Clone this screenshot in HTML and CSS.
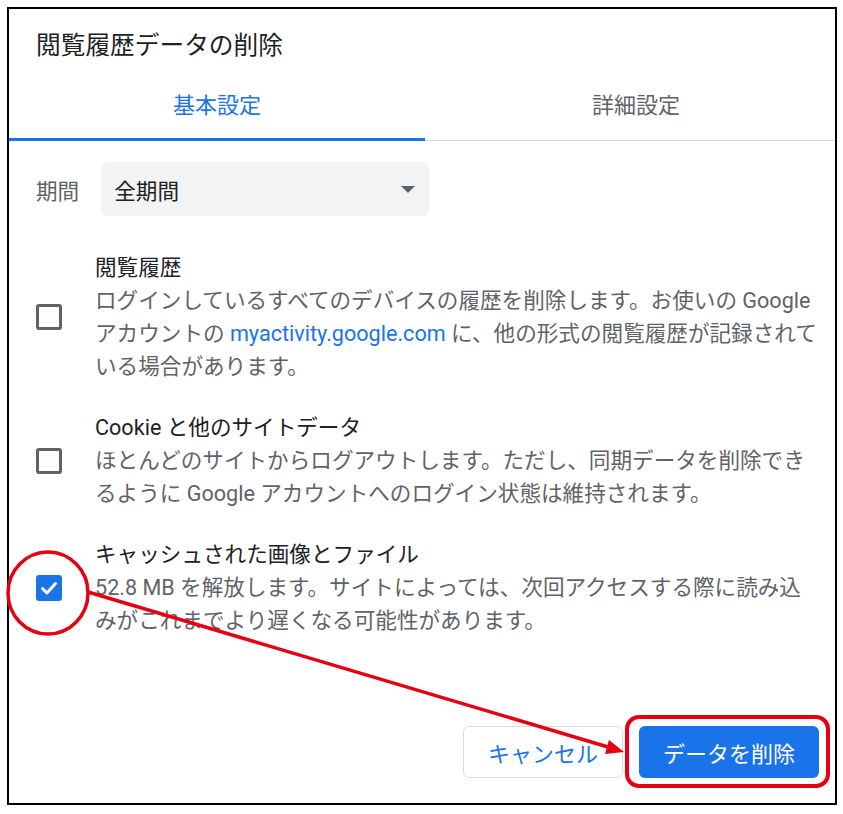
FILE: index.html
```html
<!DOCTYPE html>
<html lang="ja">

<head>
    <meta charset="UTF-8">
    <meta name="viewport" content="width=device-width, initial-scale=1.0">
    <title>閲覧履歴データの削除</title>
    <link rel="stylesheet" href="styles.css">
</head>

<body>
    <div class="dialog">
        <h1 class="dialog-title">閲覧履歴データの削除</h1>

        <div class="tabs">
            <div class="tab active">基本設定</div>
            <div class="tab">詳細設定</div>
        </div>

        <div class="period-row">
            <span class="period-label">期間</span>
            <div class="select">
                <span>全期間</span>
                <span class="select-arrow"></span>
            </div>
        </div>

        <!-- Checkbox items -->
        <div class="items">
            <div class="item">
                <span class="checkbox"></span>
                <div class="item-text">
                    <div class="item-title">閲覧履歴</div>
                    <div class="item-desc">ログインしているすべてのデバイスの履歴を削除します。お使いの Google<br>アカウントの <a class="link">myactivity.google.com</a> に、他の形式の閲覧履歴が記録されて<br>いる場合があります。</div>
                </div>
            </div>

            <div class="item">
                <span class="checkbox"></span>
                <div class="item-text">
                    <div class="item-title">Cookie と他のサイトデータ</div>
                    <div class="item-desc">ほとんどのサイトからログアウトします。ただし、同期データを削除でき<br>るように Google アカウントへのログイン状態は維持されます。</div>
                </div>
            </div>

            <div class="item">
                <span class="checkbox checked">
                    <svg width="26" height="26" viewBox="0 0 26 26">
                        <polyline points="6.5,13.5 11,18 19.5,8.5" fill="none" stroke="#fff" stroke-width="3" stroke-linecap="round" stroke-linejoin="round" />
                    </svg>
                </span>
                <div class="item-text">
                    <div class="item-title">キャッシュされた画像とファイル</div>
                    <div class="item-desc">52.8 MB を解放します。サイトによっては、次回アクセスする際に読み込<br>みがこれまでより遅くなる可能性があります。</div>
                </div>
            </div>
        </div>

        <div class="actions">
            <button class="btn btn-cancel">キャンセル</button>
            <button class="btn btn-primary">データを削除</button>
        </div>
    </div>

    <!-- Red annotation marks -->
    <svg class="annotations" width="843" height="814" viewBox="0 0 843 814">
        <ellipse cx="48" cy="593" rx="40" ry="41" fill="none" stroke="#e60012" stroke-width="3.5" />
        <line x1="88" y1="592" x2="608" y2="747" stroke="#e60012" stroke-width="3.5" />
        <polygon points="624,752 609,740 605,754" fill="#e60012" />
        <rect x="627" y="717" width="201" height="69" rx="12" fill="none" stroke="#e60012" stroke-width="4" />
    </svg>
</body>

</html>
```

FILE: styles.css
```css
body {
    margin: 0;
    background: #ffffff;
    font-family: Roboto, "Noto Sans CJK JP", sans-serif;
    color: #202124;
}

.dialog {
    margin: 7px;
    width: 830px;
    height: 798px;
    box-sizing: border-box;
    border: 2px solid #000000;
    display: flex;
    flex-direction: column;
}

.dialog-title {
    margin: 0;
    padding: 22px 27px 0;
    font-size: 24.7px;
    line-height: 30px;
    font-weight: 400;
    color: #202124;
}

/* Tabs */
.tabs {
    display: flex;
    margin-top: 14px;
    border-bottom: 1px solid #dadce0;
}

.tab {
    flex: 1;
    text-align: center;
    font-size: 22px;
    line-height: 30px;
    padding: 16px 0 17px;
    color: #5f6368;
    border-bottom: 3px solid transparent;
    margin-bottom: -1px;
}

.tab + .tab {
    padding-left: 12px;
}

.tab.active {
    flex: 0 0 416px;
    color: #1a73e8;
    border-bottom-color: #1a73e8;
}

/* Period select */
.period-row {
    display: flex;
    align-items: center;
    gap: 22px;
    margin-top: 21px;
    padding: 0 27px;
}

.period-label {
    font-size: 21.6px;
    color: #5f6368;
}

.select {
    width: 328px;
    height: 54px;
    box-sizing: border-box;
    background: #f1f3f4;
    border-radius: 6px;
    display: flex;
    align-items: center;
    justify-content: space-between;
    padding: 0 14px 0 13px;
    font-size: 21.6px;
    color: #202124;
}

.select-arrow {
    width: 0;
    height: 0;
    border-left: 7px solid transparent;
    border-right: 7px solid transparent;
    border-top: 7px solid #5f6368;
}

/* Items */
.items {
    margin-top: 35px;
}

.item {
    display: flex;
    align-items: center;
    gap: 33px;
    padding-left: 27px;
    margin-bottom: 28px;
}

.checkbox {
    width: 26px;
    height: 26px;
    flex-shrink: 0;
    box-sizing: border-box;
    border: 3px solid #5f6368;
    border-radius: 3px;
}

.checkbox.checked {
    border: none;
    background: #1a73e8;
}

.checkbox svg {
    display: block;
}

.item-text {
    font-size: 21.6px;
    line-height: 33px;
    white-space: nowrap;
}

.item-title {
    color: #202124;
}

.item-desc {
    color: #5f6368;
}

.link {
    color: #1a73e8;
    text-decoration: none;
}

/* Buttons */
.actions {
    margin-top: auto;
    display: flex;
    justify-content: flex-end;
    gap: 16px;
    padding: 0 16px 25px 0;
}

.btn {
    height: 52px;
    border-radius: 6px;
    font-family: inherit;
    font-size: 22px;
    cursor: pointer;
}

.btn-cancel {
    width: 160px;
    background: #ffffff;
    border: 1px solid #dadce0;
    color: #1a73e8;
}

.btn-primary {
    width: 180px;
    background: #1a73e8;
    border: none;
    color: #ffffff;
}

.annotations {
    position: absolute;
    top: 0;
    left: 0;
    pointer-events: none;
}
```
